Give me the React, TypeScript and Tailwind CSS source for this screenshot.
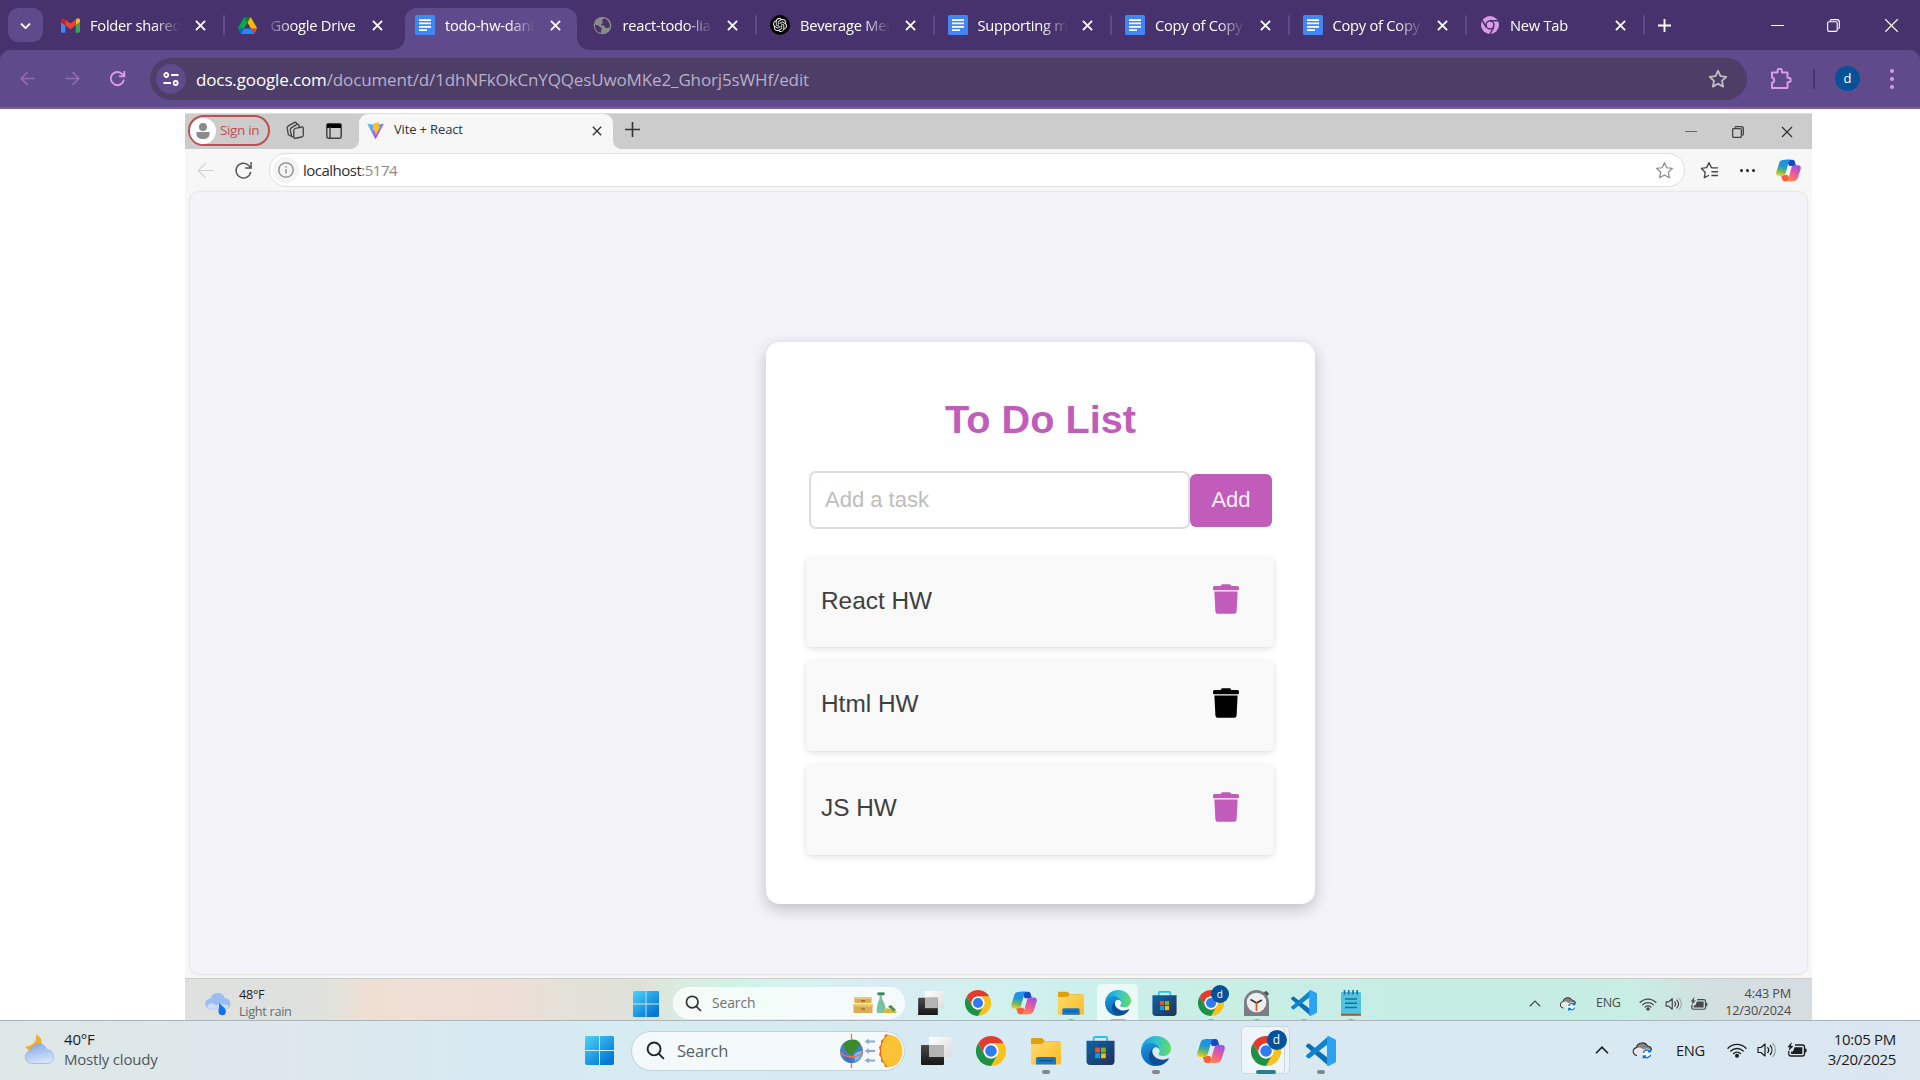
import type { ReactNode } from "react";
import { SiOpenai } from "react-icons/si";

/* ---------- brand and app icons ---------- */

const Gmail = () => (
  <svg viewBox="52 42 88 66" className="h-[15px] w-[19px]">
    <path fill="#4285f4" d="M58 108h14V74L52 59v43c0 3.32 2.69 6 6 6" />
    <path fill="#34a853" d="M120 108h14c3.32 0 6-2.69 6-6V59l-20 15" />
    <path fill="#fbbc04" d="M120 48v26l20-15v-8c0-7.42-8.47-11.65-14.4-7.2" />
    <path fill="#ea4335" d="M72 74V48l24 18 24-18v26L96 92" />
    <path fill="#c5221f" d="M52 51v8l20 15V48l-5.6-4.2c-5.94-4.45-14.4-.22-14.4 7.2" />
  </svg>
);

const Drive = () => (
  <svg viewBox="0 0 87.3 78" className="h-[17px] w-[19px]">
    <path fill="#0066da" d="m6.6 66.85 3.85 6.65c.8 1.4 1.95 2.5 3.3 3.3l13.75-23.8h-27.5c0 1.55.4 3.1 1.2 4.5z" />
    <path fill="#00ac47" d="m43.65 25-13.75-23.8c-1.35.8-2.5 1.9-3.3 3.3l-25.4 44a9.06 9.06 0 0 0 -1.2 4.5h27.5z" />
    <path fill="#ea4335" d="m73.55 76.8c1.35-.8 2.5-1.9 3.3-3.3l1.6-2.75 7.65-13.25c.8-1.4 1.2-2.95 1.2-4.5h-27.502l5.852 11.5z" />
    <path fill="#00832d" d="m43.65 25 13.75-23.8c-1.35-.8-2.9-1.2-4.5-1.2h-18.5c-1.6 0-3.15.45-4.5 1.2z" />
    <path fill="#2684fc" d="m59.8 53h-32.3l-13.75 23.8c1.35.8 2.9 1.2 4.5 1.2h50.8c1.6 0 3.15-.45 4.5-1.2z" />
    <path fill="#ffba00" d="m73.4 26.5-12.7-22c-.8-1.4-1.95-2.5-3.3-3.3l-13.75 23.8 16.15 28h27.45c0-1.55-.4-3.1-1.2-4.5z" />
  </svg>
);

const Docs = () => (
  <svg viewBox="0 0 20 20" className="size-5">
    <rect width="20" height="20" rx="1.5" fill="#4285f4" />
    <path d="M4 5.2h12M4 8.4h12M4 11.9h12M4 15.2h8" stroke="#fff" strokeWidth="1.7" />
  </svg>
);

const Globe = () => (
  <svg viewBox="0 0 20 20" className="size-[19px]">
    <circle cx="10" cy="10" r="9.3" fill="#8a8a86" />
    <path
      d="M2.2 9.2c2 .2 3.8.4 4.3 1.8.5 1.1 2 .7 2.6 1.6.6 1.1-.6 1.8-.6 2.9 0 .9-.1 1.8-.4 2.3-3.6-.6-6.6-4.3-5.9-8.6zM12 2.3c-.5 1.3-2.4 1-2.6 2.5-.1 1 1.3 1.3 1 2.4-.4 1.2-1.9.8-2 2 .6 1.1 2.2.3 3.3 1 1.2.8.7 2.3 2.3 2.5 1.4.1 2.3-.7 3.7-.9.6-4.4-1.9-8-5.7-9.5z"
      fill="#47326e"
    />
  </svg>
);

const Gpt = () => (
  <span className="flex size-5 items-center justify-center rounded-full bg-black">
    <SiOpenai className="size-[14px] text-white" />
  </span>
);

const ChromeMono = () => (
  <svg viewBox="0 0 48 48" className="size-[18px]">
    <circle cx="24" cy="24" r="24" fill="#dc9be8" />
    <circle cx="24" cy="24" r="10.5" fill="#dc9be8" stroke="#47326e" strokeWidth="4" />
    <path d="M24 12.5h21M14 30 3.5 12M34 30 24 48" stroke="#47326e" strokeWidth="4" />
  </svg>
);

const Chrome = ({ className }: { className: string }) => (
  <svg viewBox="0 0 48 48" className={className}>
    <path fill="#e33b2e" d="M24 12H44.785A24 24 0 0 0 3.215 12L13.608 30A12 12 0 0 1 24 12Z" />
    <path fill="#fcc016" d="M34.392 30L24 48A24 24 0 0 0 44.785 12H24A12 12 0 0 1 34.392 30Z" />
    <path fill="#1f9145" d="M13.608 30L3.215 12A24 24 0 0 0 24 48L34.392 30A12 12 0 0 1 13.608 30Z" />
    <circle cx="24" cy="24" r="12" fill="#fff" />
    <circle cx="24" cy="24" r="9.3" fill="#2f7bf0" />
  </svg>
);

const Edge = ({ className }: { className: string }) => (
  <svg viewBox="0 0 256 256" className={className}>
    <defs>
      <linearGradient id="edgeTop" x1="0" y1="0.4" x2="1" y2="0.5">
        <stop offset="0" stopColor="#1a9be0" />
        <stop offset="0.5" stopColor="#33c3d0" />
        <stop offset="1" stopColor="#63dc62" />
      </linearGradient>
      <linearGradient id="edgeMid" x1="0" y1="0" x2="0.3" y2="1">
        <stop offset="0" stopColor="#1b9de2" />
        <stop offset="1" stopColor="#0b62b8" />
      </linearGradient>
    </defs>
    <path fill="#0c4f98" d="M231.1 190.5c-3.4 1.8-6.9 3.4-10.5 4.7-11.5 4.3-23.6 6.5-35.9 6.5-47.3 0-88.5-32.5-88.5-74.3.1-11.4 6.4-21.9 16.4-27.3-42.8 1.8-53.8 46.4-53.8 72.5 0 73.9 68.1 81.4 82.8 81.4 7.9 0 19.8-2.3 27-4.6l1.3-.4c27.6-9.5 51-28.1 66.6-52.8 1.2-1.9.6-4.3-1.2-5.5-1.3-.8-2.9-.9-4.2-.2z" />
    <path fill="url(#edgeMid)" d="M105.7 241.4c-8.9-5.5-16.6-12.8-22.7-21.3-26.3-36-18.4-86.5 17.6-112.8 3.8-2.7 7.7-5.2 11.9-7.2 3.1-1.5 8.4-4.1 15.5-4 10.1.1 19.6 4.9 25.7 13 4 5.4 6.3 11.9 6.4 18.7 0-.2 24.5-79.6-80-79.6-43.9 0-80 41.7-80 78.2-.2 19.3 4 38.5 12.1 56 27.6 58.8 94.8 87.6 156.4 67.1-21.1 6.6-44.1 3.7-62.9-8.1z" />
    <path fill="url(#edgeTop)" d="M152.3 148.9c-.8 1-3.3 2.5-3.3 5.7 0 2.6 1.7 5.1 4.7 7.2 14.4 10 41.5 8.7 41.6 8.7 10.7 0 21.1-2.9 30.3-8.3 18.8-11 30.4-31.1 30.4-52.9.3-22.4-8-37.3-11.3-43.9C223.5 23.9 177.7 0 128 0 58 0 1 56.2 0 126.2c.5-36.5 36.8-66 80-66 3.5 0 23.5.3 42 10.1 16.3 8.6 24.9 18.9 30.8 29.2 6.2 10.7 7.3 24.1 7.3 29.5 0 5.3-2.7 13.3-7.8 19.9z" />
  </svg>
);

const Copilot = ({ className }: { className: string }) => (
  <svg viewBox="0 0 28 28" className={className}>
    <defs>
      <linearGradient id="copL" x1="0.5" y1="0" x2="0.3" y2="1">
        <stop offset="0" stopColor="#1f8df0" />
        <stop offset="0.4" stopColor="#2298d0" />
        <stop offset="0.7" stopColor="#6fb562" />
        <stop offset="1" stopColor="#f0d120" />
      </linearGradient>
      <linearGradient id="copR" x1="0.6" y1="0" x2="0.2" y2="1">
        <stop offset="0" stopColor="#a052ea" />
        <stop offset="0.5" stopColor="#ec5c96" />
        <stop offset="1" stopColor="#ff8a4a" />
      </linearGradient>
    </defs>
    <path fill="#1649c4" d="M11 2h7.500c1.500 0 2.300 1 2.700 2.400L22.500 9H15z" />
    <path fill="#f5603e" d="M17 26H9.500c-1.500 0-2.300-1-2.700-2.400L5.500 19H13z" />
    <path fill="url(#copL)" d="M9.500 2h7c-1.400.5-2 1.800-2.500 3.400L10.800 17c-.6 2-1.800 3-3.700 3H3.200C.7 20-.3 18 .4 15.500L3.700 5.200C4.500 3 6.500 2 9.500 2z" />
    <path fill="url(#copR)" d="M18.500 26h-7c1.400-.5 2-1.800 2.500-3.400L17.200 11c.6-2 1.800-3 3.700-3h3.900c2.500 0 3.500 2 2.800 4.500l-3.300 10.300c-.8 2.200-2.800 3.200-5.800 3.200z" />
  </svg>
);

const Folder = ({ className }: { className: string }) => (
  <svg viewBox="0 0 30 30" className={className}>
    <defs>
      <linearGradient id="fold" x1="0" y1="0" x2="1" y2="1">
        <stop offset="0" stopColor="#ffdb6b" />
        <stop offset="1" stopColor="#fbbb25" />
      </linearGradient>
    </defs>
    <path fill="#dfa00c" d="M0 3.500C0 2.500.7 2 1.500 2H10c1 0 1.600.4 2.200 1.200L13.500 5H28v6H0z" />
    <path fill="url(#fold)" d="M0 8h9.500c1.200 0 2-.5 2.800-1.300L14 5.200h14.500c.9 0 1.500.6 1.500 1.500V27c0 .9-.6 1.500-1.500 1.500h-27C.6 28.500 0 27.900 0 27z" />
    <path fill="#1678c8" d="M5 28.500v-5.800C5 21.600 5.800 21 7 21h16c1.200 0 2 .6 2 1.700v5.800z" />
    <path stroke="#0f4f91" strokeWidth="1.2" d="M8 24.600h14" />
  </svg>
);

const Store = ({ className }: { className: string }) => (
  <svg viewBox="0 0 30 30" className={className}>
    <defs>
      <linearGradient id="store" x1="0" y1="0" x2="1" y2="1">
        <stop offset="0" stopColor="#0f63ac" />
        <stop offset="1" stopColor="#232f54" />
      </linearGradient>
    </defs>
    <path d="M8 6V2.500c0-1 .5-1.500 1.500-1.500h11c1 0 1.500.5 1.500 1.500V6" fill="none" stroke="#2dbdf0" strokeWidth="1.900" />
    <path fill="url(#store)" d="M.5 5h29v21.500c0 2-1.500 3.500-3.500 3.500H4c-2 0-3.500-1.500-3.500-3.500z" />
    <path fill="#f25022" d="M9.500 12h5v5h-5z" />
    <path fill="#7fba00" d="M15.500 12h5v5h-5z" />
    <path fill="#00a4ef" d="M9.500 18h5v5h-5z" />
    <path fill="#ffb900" d="M15.500 18h5v5h-5z" />
  </svg>
);

const Code = ({ className }: { className: string }) => (
  <svg viewBox="0 0 30 30" className={className}>
    <path fill="#0a6fb5" d="M0 9.500 2 7.800c.5-.4 1-.4 1.500 0L22 22v7.500L.3 10.800C0 10.400-.2 10 0 9.500z" />
    <path fill="#0e83ce" d="M0 20.500 2 22.300c.5.4 1 .4 1.500 0L22 8V.5L.3 19.200c-.3.4-.5.9-.3 1.300z" />
    <path fill="#2ba3f2" d="M21.500.3c.5-.3 1-.3 1.500 0l6 2.900c.6.3 1 .9 1 1.600v20.400c0 .7-.4 1.300-1 1.600l-6 2.900c-.5.3-1 .3-1.500 0-.3-.2-.5-.5-.5-1V1.300c0-.5.2-.8.5-1z" />
  </svg>
);

const TaskView = ({ className }: { className: string }) => (
  <svg viewBox="0 0 30 28" className={className}>
    <defs>
      <linearGradient id="tvDark" x1="0" y1="0" x2="0" y2="1">
        <stop offset="0" stopColor="#4a4a4a" />
        <stop offset="1" stopColor="#161616" />
      </linearGradient>
      <linearGradient id="tvLight" x1="0" y1="0" x2="1" y2="1">
        <stop offset="0" stopColor="#ffffff" />
        <stop offset="1" stopColor="#dcdcdc" />
      </linearGradient>
    </defs>
    <rect x="8" width="22" height="20" rx="1" fill="url(#tvLight)" />
    <rect y="8" width="23" height="20" rx="1" fill="url(#tvDark)" />
    <rect x="8" y="8" width="15" height="12" fill="#b4b4b4" />
  </svg>
);

const Windows = ({ className }: { className: string }) => (
  <svg viewBox="0 0 30 30" className={className}>
    <defs>
      <linearGradient id="win" gradientUnits="userSpaceOnUse" x1="0" y1="0" x2="24" y2="26">
        <stop offset="0" stopColor="#4fd3fb" />
        <stop offset="1" stopColor="#0379d6" />
      </linearGradient>
    </defs>
    <path fill="url(#win)" d="M1.500 0h13v14.500H0V1.500Q0 0 1.500 0zM15.500 0h13Q30 0 30 1.500v13H15.500zM0 15.500h14.500V30h-13Q0 30 0 28.500zM15.500 15.500H30v13q0 1.500-1.500 1.500h-13z" />
  </svg>
);

const Clock = () => (
  <svg viewBox="0 0 26 26" className="size-[26px]">
    <path d="M18.500 3.500 22 .8l3 3-2.500 3z" fill="#4e4e52" />
    <path d="M0 26V12.500a12.500 12.500 0 0 1 25 0V26z" fill="#7b7d84" />
    <circle cx="12.5" cy="12.5" r="9.8" fill="#eeeeee" />
    <path d="m6.500 9.500 6 3.500 5.500-3" fill="none" stroke="#333" strokeWidth="1.600" />
    <path d="M12.500 12.500V21" stroke="#dd5a2a" strokeWidth="1.800" />
  </svg>
);

const Notepad = () => (
  <svg viewBox="0 0 20 26" className="h-[26px] w-[20px]">
    <rect y="2" width="20" height="22" rx="1" fill="#4fc3e2" />
    <path d="M0 24.800h20" stroke="#a95a2d" strokeWidth="2" />
    <path d="M3.500 0v4.500M7.700 0v4.500M12 0v4.500M16.200 0v4.500" stroke="#20708c" strokeWidth="1.600" />
    <path d="M4 9h12M4 13.200h12M4 17.400h12" stroke="#1d6f93" strokeWidth="1.500" />
  </svg>
);

const Vite = () => (
  <svg viewBox="0 0 18 18" className="h-[17px] w-[17px]">
    <defs>
      <linearGradient id="viteA" x1="0" y1="0" x2="0.7" y2="1">
        <stop offset="0" stopColor="#41d1ff" />
        <stop offset="1" stopColor="#b52dfe" />
      </linearGradient>
    </defs>
    <path fill="url(#viteA)" d="M17.600 2.500 9.500 17.400c-.2.4-.7.4-.9 0L.4 2.500c-.2-.4.1-.8.5-.7L9 3.200l8.100-1.400c.4-.1.7.3.5.7z" />
    <path fill="#fcc21e" d="m12.800.2-5.700 1c-.1 0-.2.1-.2.3L6 8.600c0 .2.1.3.3.3l2-.4-.3 2.700c0 .2.1.3.3.3l1-.3-.5 3c-.1.2.2.4.3.2l5.200-10-2 .3z" />
  </svg>
);

/* ---------- line icons ---------- */

const Cross = ({ className }: { className: string }) => (
  <svg viewBox="0 0 12 12" fill="none" stroke="currentColor" className={className}>
    <path d="m1 1 10 10M11 1 1 11" />
  </svg>
);

const Plus = ({ className }: { className: string }) => (
  <svg viewBox="0 0 14 14" fill="none" stroke="currentColor" className={className}>
    <path d="M7 0v14M0 7h14" />
  </svg>
);

const Arrow = ({ className }: { className: string }) => (
  <svg viewBox="0 0 16 16" fill="none" stroke="currentColor" className={className}>
    <path d="M15.500 8H1.500M8 1.200 1.200 8 8 14.800" />
  </svg>
);

const Reload = ({ className }: { className: string }) => (
  <svg viewBox="0 0 18 18" fill="none" stroke="currentColor" className={className}>
    <path d="M15.800 10.200a7 7 0 1 1-1.600-5.700l2 2.200M16.200 1v5.700h-5.700" />
  </svg>
);

const Star = ({ className }: { className: string }) => (
  <svg viewBox="0 0 20 20" fill="none" stroke="currentColor" strokeLinejoin="round" className={className}>
    <path d="m10 1.800 2.500 5.300 5.800.7-4.300 4 1.100 5.800L10 14.800l-5.100 2.800L6 11.800l-4.300-4 5.800-.7z" />
  </svg>
);

const Restore = ({ className }: { className: string }) => (
  <svg viewBox="0 0 14 14" fill="none" stroke="currentColor" className={className}>
    <rect x="0.7" y="3" width="10.3" height="10.3" rx="1.5" />
    <path d="M3.200 1.800Q3.700.7 5 .7h5.500q2.800 0 2.800 2.800V9q0 1.300-1.100 1.800" />
  </svg>
);

const Magnifier = ({ className }: { className: string }) => (
  <svg viewBox="0 0 20 20" fill="none" stroke="currentColor" className={className}>
    <circle cx="8.5" cy="8.3" r="6.8" />
    <path d="m13.300 13.300 5.500 5.500" />
  </svg>
);

const Chevron = ({ className }: { className: string }) => (
  <svg viewBox="0 0 14 8" fill="none" stroke="currentColor" className={className}>
    <path d="m1 7.200 6-6 6 6" />
  </svg>
);

const Wifi = ({ className }: { className: string }) => (
  <svg viewBox="0 0 20 16" fill="none" stroke="currentColor" strokeLinecap="round" className={className}>
    <path d="M1 6.200a12.600 12.600 0 0 1 18 0M3.800 9a8.800 8.800 0 0 1 12.400 0M6.600 11.600a4.900 4.900 0 0 1 6.800 0" />
    <circle cx="10" cy="13.8" r="1.3" fill="currentColor" />
  </svg>
);

const Speaker = ({ className }: { className: string }) => (
  <svg viewBox="0 0 20 16" fill="none" stroke="currentColor" strokeLinecap="round" strokeLinejoin="round" className={className}>
    <path d="M1 5.500h3L8 2v12l-4-3.500H1z" />
    <path d="M10.800 5.500a4 4 0 0 1 0 5M13.300 3.500a7 7 0 0 1 0 9" />
    <path d="M16 1.500a10 10 0 0 1 0 13" opacity="0.35" />
  </svg>
);

const Battery = ({ className }: { className: string }) => (
  <svg viewBox="0 0 20 16" fill="none" stroke="currentColor" className={className}>
    <path d="M8 3h7.500q2 0 2 2v7q0 2-2 2H3.800q-2 0-2-2V9" />
    <path d="M18.500 6.700v3.600" strokeWidth="2" />
    <path d="M7.500 5.200h7.800V12H4V9.500h2z" fill="currentColor" stroke="none" />
    <path d="M4.800 0 .5 5.200h2.200L1.500 9 6.500 4H4z" fill="currentColor" stroke="none" />
  </svg>
);

const CloudSync = ({ className }: { className: string }) => (
  <svg viewBox="0 0 21 18" className={className}>
    <path d="M5 14.500a4 4 0 0 1-.6-7.900A6 6 0 0 1 15.500 5a4.300 4.300 0 0 1 4 4.500v4z" fill="#e9e9e9" />
    <path d="M2.500 7.500 8 6.500l9 4.500 2.800-2A4.300 4.300 0 0 0 15.500 5 6 6 0 0 0 4.500 6.300z" fill="#858585" />
    <path d="M5 14.500a4 4 0 0 1-.6-7.900A6 6 0 0 1 15.500 5a4.300 4.300 0 0 1 4 4" fill="none" stroke="#333" strokeWidth="1.200" />
    <circle cx="15" cy="12.8" r="5.2" fill="#fff" />
    <path d="M11.200 12a4 4 0 0 1 6.800-1.800M18.800 13.600a4 4 0 0 1-6.800 1.800M18.600 8v2.700h-2.700M11.400 17.600v-2.700h2.700" fill="none" stroke="#1673cc" strokeWidth="1.500" />
  </svg>
);

const Trash = () => (
  <svg viewBox="0 0 26 30" fill="currentColor" className="-mt-[3px] h-[30px] w-[26px]">
    <path d="M8 1.500Q8.200.3 9.500.3h7Q17.800.3 18 1.500l.2.500h6.300Q26 2.200 26 4v1.200q0 1-1 1H1q-1 0-1-1V4q0-1.800 1.500-2h6.300z" />
    <path d="M1.400 7.600h23.200l-1 19.800q-.2 2.300-2.300 2.300H4.700q-2.100 0-2.300-2.300z" />
  </svg>
);

const CloudMoon = () => (
  <svg viewBox="0 0 30 30" className="size-[30px]">
    <defs>
      <linearGradient id="cloudA" x1="0" y1="0" x2="0.3" y2="1">
        <stop offset="0" stopColor="#7fa6e8" />
        <stop offset="1" stopColor="#d3e3fb" />
      </linearGradient>
    </defs>
    <path d="M11 .5c4.500 2 6.500 6 5.500 10.500L5 17C3 16 1.300 14.500.5 12.800 7 12 12.500 8 11 .5z" fill="#f5ac28" />
    <path d="M6.500 29.500a6.500 6.500 0 0 1-.8-12.900 8.500 8.500 0 0 1 16.300-.8 7 7 0 0 1 1.500 13.700z" fill="url(#cloudA)" stroke="#7d9bdb" strokeWidth="0.5" />
  </svg>
);

const CloudRain = () => (
  <svg viewBox="0 0 26 24" className="h-6 w-[26px]">
    <path d="M6 17.500a5.500 5.500 0 0 1-.5-11 7.500 7.500 0 0 1 14.300-.5 5.800 5.800 0 0 1 .7 11.500z" fill="#9dbcf2" />
    <path d="M2 14c3-4 8-3 9 0 3-3 9-2 13 0-1 2-2.500 3.500-4 3.500H6c-2 0-3.500-1.500-4-3.500z" fill="#cbdcfa" />
    <path d="M14 11c.5 4-.5 5.500-.5 8.500a3.700 3.700 0 0 0 7.400 0c0-3.500-4-5.500-6.900-8.500z" fill="#1673ee" />
  </svg>
);

const EquinoxArt = () => (
  <svg viewBox="0 0 63 34" className="h-[34px] w-[63px]">
    <circle cx="11.5" cy="17.5" r="11.5" fill="#4a7fbf" />
    <path d="M4 9.500C9 4 18 4.500 20.500 10c-3 1-1.500 5-5 6-2.500.5-1 4-4 5C8 20 4 16 4 9.500z" fill="#3c8a28" />
    <path d="M14 21c2-2 4-4 8.500-4-.5 5-3 8.500-7.500 10.500z" fill="#78bdf2" />
    <path d="M5 22c2 0 6 2 6 6-3 0-5.500-2-6-6z" fill="#2f74c0" />
    <path d="M11.500 0v6M11.500 29v5M.3 17.500c2 7 20 7 22.500 0" fill="none" stroke="#f0705a" strokeWidth="1.300" />
    <path d="M27 7.500h8M27 17h8M27 26.500h8" stroke="#8fa9cc" strokeWidth="2" />
    <path d="m29 4.800-4.500 2.700 4.500 2.700zM29 14.300 24.500 17l4.500 2.700zM29 23.800l-4.500 2.700 4.500 2.700z" fill="#8fa9cc" />
    <path d="M49 .5h-4l-1 4-3 2v4l-2 2.500 1 4-1 4 2 2.500v4l3 2 1 3.500h4z" fill="#e46a1c" />
    <path d="M48 .8C57 .8 62.500 8 62.500 17S57 33.200 48 33.200C43 29 41 23 41 17S43 5 48 .8z" fill="#fac234" />
  </svg>
);

const CleaningArt = () => (
  <svg viewBox="0 0 44 22" className="h-[22px] w-[44px]">
    <path d="M1.500 6h17v5h-17zM.5 13h19v8H.5z" fill="#dcab52" />
    <path d="M1 5h18v2H1zM0 12h20v2.500H0z" fill="#f0c96d" />
    <path d="M8 8.800h4M8 17h4" stroke="#7d5a22" strokeWidth="1.200" />
    <path d="M24.500.5h7V3L29 4v3c3 4 4 9 3.500 14h-8.500C23 16 24.500 11 26.500 7V3.500h-2z" fill="#79c3a4" />
    <path d="M24.500.5h7V3h-7z" fill="#3f8a63" />
    <path d="m29 20.500 5-4.500 9.500 3.500v1.500H30z" fill="#d9b53a" />
    <path d="m35 14.500 3-1.500 5 5-2.500 1.500z" fill="#4b8f3a" />
  </svg>
);

/* ---------- shared pieces ---------- */

const Badge = ({ className }: { className: string }) => (
  <span className={`absolute flex items-center justify-center rounded-full bg-[#04529a] text-white ${className}`}>d</span>
);

type TabProps = { icon: ReactNode; title: string; kind?: "active" | "right" | "plain"; separator?: boolean };

function Tab({ icon, title, kind = "plain", separator = true }: TabProps) {
  const active = kind === "active";
  return (
    <div className="relative flex h-[50px] w-[177.5px] shrink-0 items-start pt-2">
      {active && (
        <>
          <span className="absolute inset-x-[3px] top-2 bottom-0 rounded-t-[12px] bg-[#5f4b8b]" />
          <span className="absolute bottom-0 -left-[9px] size-3 bg-[radial-gradient(circle_at_0_0,#47326e_11.5px,#5f4b8b_12px)]" />
          <span className="absolute -right-[9px] bottom-0 size-3 bg-[radial-gradient(circle_at_100%_0,#47326e_11.5px,#5f4b8b_12px)]" />
        </>
      )}
      <div className="relative flex h-[34px] w-full items-center pl-[13px]">
        <span className="flex w-5 justify-center">{icon}</span>
        <span
          className={
            kind === "right"
              ? "ml-2.5 flex w-[88px] justify-end overflow-hidden mask-l-from-70% mask-l-to-105% whitespace-nowrap"
              : "ml-2.5 w-[90px] overflow-hidden mask-r-from-70% mask-r-to-100% whitespace-nowrap"
          }
        >
          <span className="text-[14.7px] leading-6 tracking-[-0.25px] text-white">{title}</span>
        </span>
        <span className={kind === "right" ? "ml-4 flex w-3 justify-center" : "ml-[14px] flex w-3 justify-center"}>
          <Cross className="size-[11px] stroke-2 text-white" />
        </span>
      </div>
      {separator && <span className="absolute top-[15px] right-0 h-5 w-0.5 rounded bg-[#5f4b8b]" />}
    </div>
  );
}

function ChromeHeader() {
  return (
    <header className="h-[109px] border-b-2 border-[#8159a4] bg-[#47326e]">
      <div className="flex h-[50px] items-start">
        <button className="mt-2 ml-2 flex h-[34px] w-[35px] items-center justify-center rounded-[10px] bg-[#5f4b8b]">
          <Chevron className="mt-px h-1.5 w-[11px] rotate-180 stroke-[2.5] text-white" />
        </button>
        <div className="ml-1 flex">
          <Tab icon={<Gmail />} title="Folder shared" />
          <Tab icon={<Drive />} title="Google Drive" kind="right" separator={false} />
          <Tab icon={<Docs />} title="todo-hw-dani" kind="active" separator={false} />
          <Tab icon={<Globe />} title="react-todo-lia" />
          <Tab icon={<Gpt />} title="Beverage Mer" />
          <Tab icon={<Docs />} title="Supporting m" />
          <Tab icon={<Docs />} title="Copy of Copy" />
          <Tab icon={<Docs />} title="Copy of Copy" />
          <Tab icon={<ChromeMono />} title="New Tab" />
        </div>
        <div className="flex h-[50px] flex-1 items-center pl-[13px] text-white">
          <Plus className="size-[13px] stroke-2" />
          <span className="ml-[100px] h-px w-[13px] bg-white" />
          <Restore className="ml-[43px] size-[13px] stroke-[1.2]" />
          <Cross className="ml-[44px] size-[15px] stroke-[0.9]" />
        </div>
      </div>
      <div className="flex h-[57px] items-center rounded-t-[10px] bg-[#5f4b8b]">
        <Arrow className="ml-5 size-[15px] stroke-[1.8] text-[#916bb3]" />
        <Arrow className="ml-[30px] size-[15px] rotate-180 stroke-[1.8] text-[#916bb3]" />
        <Reload className="ml-[29px] size-[17px] stroke-2 text-[#dc9be8]" />
        <div className="ml-6 flex h-[42px] w-[1597px] items-center rounded-full bg-[#4c3e67] pl-1.5">
          <span className="flex size-[30px] items-center justify-center rounded-full bg-[#5f4b8b]">
            <svg viewBox="0 0 16 16" className="size-4" fill="none" stroke="#fff" strokeWidth="1.8">
              <circle cx="3.3" cy="4" r="2" />
              <path d="M8 4h7.500M.5 12H8" />
              <circle cx="12.7" cy="12" r="2" />
            </svg>
          </span>
          <span className="ml-2.5 flex-1 pt-0.5 text-[17px] tracking-[-0.13px] text-[#b9b0c9]">
            <span className="text-white">docs.google.com</span>/document/d/1dhNFkOkCnYQQesUwoMKe2_Ghorj5sWHf/edit
          </span>
          <Star className="mr-[19px] size-5 stroke-[1.8] text-[#c3c0c4]" />
        </div>
        <svg viewBox="0 0 22 22" className="ml-[23px] size-[22px]" fill="none" stroke="#dc9be8" strokeWidth="2" strokeLinejoin="round">
          <path d="M2 4.500h5.500V3a2.200 2.200 0 0 1 4.400 0v1.500h5.600v5.300h1a2.200 2.200 0 0 1 0 4.400h-1V20H2v-5.200a2.700 2.700 0 0 0 0-5.300z" />
        </svg>
        <span className="ml-[21px] h-5 w-0.5 bg-[#47326e]" />
        <span className="ml-5 flex size-[25px] items-center justify-center rounded-full bg-[#04529a] text-[13px] text-white">d</span>
        <span className="ml-[30px] flex flex-col gap-[4px]">
          <span className="size-1 rounded-full bg-[#dc9be8]" />
          <span className="size-1 rounded-full bg-[#dc9be8]" />
          <span className="size-1 rounded-full bg-[#dc9be8]" />
        </span>
      </div>
    </header>
  );
}

function EdgeHeader() {
  return (
    <>
      <div className="flex h-9 items-start border-t border-[#dedede] bg-[#cccccc] text-[#333]">
        <div className="mt-px ml-[3px] flex h-[31px] w-[82px] items-center rounded-full border-2 border-[#bd4f52]">
          <span className="flex size-[26px] items-center justify-center rounded-full bg-white">
            <svg viewBox="0 0 14 16" className="h-4 w-3.5" fill="#8b8b8b">
              <circle cx="7" cy="4" r="4" />
              <path d="M0.500 9h13v2C13.500 14.500 11 16 7 16S.5 14.500.5 11z" />
            </svg>
          </span>
          <span className="ml-1 text-[13.5px] tracking-[-0.35px] text-[#bd4f52]">Sign in</span>
        </div>
        <svg viewBox="0 0 20 20" className="mt-[7px] ml-[16px] size-[19px]" fill="#cccccc" stroke="#444" strokeWidth="1.4" strokeLinejoin="round">
          <path d="M2.500 14.500 1.200 7.500Q1 6 2.500 5.200L9 1.500q1.500-.5 2 .8l.5 1.700-6 12z" />
          <path d="M6 16.500 4.500 9.500Q4.300 8 5.500 7.200L11.500 3.500q1.500-.5 2 .8l.5 1.700-5 11z" />
          <rect x="8.200" y="7" width="10" height="10.500" rx="1.800" transform="skewY(-12) translate(0 2.800)" />
        </svg>
        <svg viewBox="0 0 16 16" className="mt-[9px] ml-[21px] size-4" fill="none" stroke="#444" strokeWidth="1.5">
          <rect x="0.8" y="0.8" width="14.4" height="14.4" rx="2" />
          <path d="M1 3h14" stroke="#000" strokeWidth="4" />
          <path d="M4 4v11" />
        </svg>
        <div className="relative ml-[17px] flex h-[35px] w-[254px] items-center rounded-t-[9px] bg-[#f7f7f7] pb-[3px] pl-2">
          <span className="absolute bottom-0 -left-2 size-2 bg-[radial-gradient(circle_at_0_0,#cccccc_7.5px,#f7f7f7_8px)]" />
          <span className="absolute -right-2 bottom-0 size-2 bg-[radial-gradient(circle_at_100%_0,#cccccc_7.5px,#f7f7f7_8px)]" />
          <Vite />
          <span className="flex-1 pl-[10px] text-[13px] tracking-[-0.15px]">Vite + React</span>
          <Cross className="mt-0.5 mr-[11px] size-[10px] stroke-[1.6]" />
        </div>
        <Plus className="mt-2 ml-3 size-[15px] stroke-[1.5]" />
        <div className="ml-auto flex h-[35px] items-center">
          <span className="h-[1.5px] w-3 bg-[#666]" />
          <Restore className="ml-[35px] size-[12px] stroke-[1.6] text-[#444]" />
          <Cross className="mr-[19px] ml-[37px] size-3 stroke-[1.3]" />
        </div>
      </div>
      <div className="flex h-[42px] items-center bg-[#f7f7f7]">
        <Arrow className="ml-3 size-[17px] stroke-1 text-[#cfcfcf]" />
        <Reload className="ml-[20px] size-[19px] stroke-[1.4] text-[#555]" />
        <div className="ml-[16px] flex h-[34px] w-[1416px] items-center rounded-full border border-[#dfdfdf] bg-white pl-[3px]">
          <span className="flex size-[26px] items-center justify-center rounded-full bg-[#f4f4f4]">
            <svg viewBox="0 0 16 16" className="size-4" fill="none" stroke="#858585" strokeWidth="1.3">
              <circle cx="8" cy="8" r="7.2" />
              <path d="M8 7v4.500M8 4.300v1.400" />
            </svg>
          </span>
          <span className="ml-1 flex-1 text-[15px] tracking-[-0.5px] text-[#8a8a8a]">
            <span className="text-[#2f2f2f]">localhost</span>:5174
          </span>
          <Star className="mr-2.5 size-[19px] stroke-[1.3] text-[#8c8c8c]" />
        </div>
        <svg viewBox="0 0 20 20" className="ml-[15px] size-[19px]" fill="none" stroke="#444" strokeWidth="1.4" strokeLinejoin="round">
          <path d="M13.500 7.300 12 7 9.500 1.800 7 7l-5.500.8 4 4-1 5.700 5-2.500M12.500 7.300h6.500M12 11.300h7M12 15.300h7" />
        </svg>
        <span className="ml-[21px] flex gap-[3px]">
          <span className="size-[3px] rounded-full bg-[#222]" />
          <span className="size-[3px] rounded-full bg-[#222]" />
          <span className="size-[3px] rounded-full bg-[#222]" />
        </span>
        <Copilot className="ml-[21px] size-[25px]" />
      </div>
    </>
  );
}

const tasks = [
  { name: "React HW", hovered: false },
  { name: "Html HW", hovered: true },
  { name: "JS HW", hovered: false },
];

function TodoPage() {
  return (
    <div className="h-[787px] bg-[#f7f7f7] px-[5px] pt-px pb-1">
      <main className="flex h-[782px] justify-center rounded-[9px] bg-[#f4f3f9] pt-[150px] font-['Liberation_Sans',Arial,sans-serif] shadow-[0_0_3px_rgba(0,0,0,0.16)]">
        <section className="ml-[84px] h-[562px] w-[549px] rounded-[14px] bg-white px-10 shadow-[0_5px_16px_rgba(0,0,20,0.22)]">
          <h1 className="mt-[53px] text-center text-[39.7px] leading-[48px] font-bold text-[#c15cba]">To Do List</h1>
          <div className="mt-[28px] ml-[3px] flex items-center">
            <div className="flex h-[58px] w-[381px] items-center rounded-[7px] border-[2.5px] border-[#dedede] pb-px pl-[14px] text-[22px] text-[#bdbdbd]">Add a task</div>
            <button className="h-[53px] w-[82px] rounded-[6px] bg-[#c15cba] pb-px text-[22px] text-[#fbeefa]">Add</button>
          </div>
          <ul className="mt-[27.5px] mr-px flex flex-col gap-[13px]">
            {tasks.map((task) => (
              <li key={task.name} className="flex h-[90.7px] items-center justify-between rounded-[6px] bg-[#f9f9f9] pr-[35px] pb-0.5 pl-[15px] text-[24.4px] text-[#3f3f3f] shadow-[0_2px_6px_rgba(0,0,0,0.13)]">
                {task.name}
                <span className={task.hovered ? "text-black" : "text-[#c15cba]"}>
                  <Trash />
                </span>
              </li>
            ))}
          </ul>
        </section>
      </main>
    </div>
  );
}

const InnerCell = ({ children, active = false, open = false }: { children: ReactNode; active?: boolean; open?: boolean }) => (
  <span className="relative flex h-[42px] w-[46.6px] shrink-0 items-center justify-center pt-1.5">
    {active && <span className="absolute top-[5px] bottom-0 w-[41px] rounded-t-[5px] bg-white/60" />}
    <span className="relative">{children}</span>
    {open && <span className="absolute bottom-0 h-0.5 w-1.5 rounded-t bg-[#93b3ae]" />}
    {active && <span className="absolute bottom-0 h-0.5 w-4 rounded-t bg-[#86c4dd]" />}
  </span>
);

function InnerTaskbar() {
  return (
    <div className="flex h-[43px] items-start border-t border-[#c9cdcb] bg-[linear-gradient(90deg,#e0e1df_0%,#dfe1df_7%,#e3e1da_9.5%,#efdfd2_11%,#f0dfd6_15%,#eeded7_20%,#e3e1d8_23.5%,#dfe1d9_28%,#d9eee2_31%,#cff5e7_34%,#d6f1ee_38%,#d9ecf6_43%,#d3f0ee_48%,#cdf0ec_55%,#c9eee4_64%,#c5ede4_80%,#c8ede3_89%,#d3dfe0_94%,#d6dcdf_100%)] text-[#4a4a4a]">
      <span className="mt-[13px] ml-[20px]"><CloudRain /></span>
      <div className="mt-[7px] ml-2 w-[200px] text-[12.7px] leading-[17px] tracking-[-0.3px]">
        <div className="text-[#222]">48°F</div>
        <div className="text-[#6c6c6c]">Light rain</div>
      </div>
      <Windows className="mt-[12px] ml-[194px] size-[26px]" />
      <div className="mt-2 ml-[14px] flex h-8 w-[232px] items-center rounded-full border border-white/80 bg-white/75 pl-[11px]">
        <Magnifier className="size-[17px] stroke-2 text-[#333]" />
        <span className="ml-2.5 flex-1 text-[13.8px] tracking-[-0.05px] text-[#707070]">Search</span>
        <span className="mr-[7px]"><CleaningArt /></span>
      </div>
      <div className="ml-[3px] flex">
        <InnerCell><TaskView className="h-6 w-[26px]" /></InnerCell>
        <InnerCell><Chrome className="size-[26px]" /></InnerCell>
        <InnerCell><Copilot className="size-[26px]" /></InnerCell>
        <InnerCell open><Folder className="size-[26px]" /></InnerCell>
        <InnerCell active><Edge className="size-[26px]" /></InnerCell>
        <InnerCell><Store className="size-[25px]" /></InnerCell>
        <InnerCell open>
          <Chrome className="size-[26px]" />
          <Badge className="-top-[5px] -right-[5px] size-[18px] text-[10px]" />
        </InnerCell>
        <InnerCell open><Clock /></InnerCell>
        <InnerCell open><Code className="size-[26px]" /></InnerCell>
        <InnerCell open><Notepad /></InnerCell>
      </div>
      <div className="ml-auto flex h-[42px] items-center pt-[7px]">
        <Chevron className="h-[7px] w-3 stroke-[1.5]" />
        <CloudSync className="ml-[18px] h-[15px] w-[18px]" />
        <span className="ml-[19px] w-[25px] text-[12.5px] tracking-[-0.3px]">ENG</span>
        <Wifi className="ml-[18px] h-[14px] w-[18px] stroke-[1.5]" />
        <Speaker className="ml-2 h-[14px] w-[18px] stroke-[1.4]" />
        <Battery className="ml-[7px] h-[14px] w-[18px] stroke-[1.4]" />
        <span className="mr-[21px] ml-[14px] w-[69px] pb-1 text-right text-[12.7px] leading-[17px] tracking-[-0.15px] whitespace-nowrap">
          4:43 PM
          <br />
          12/30/2024
        </span>
      </div>
    </div>
  );
}

const OuterCell = ({ children, open = false, active = false }: { children: ReactNode; open?: boolean; active?: boolean }) => (
  <span className="relative flex h-[59px] w-[55px] shrink-0 items-center justify-center">
    {active && (
      <>
        <span className="absolute top-[5px] left-[7px] h-12 w-[45px] rounded-[5px] border border-[#ccd7de] bg-[#e9f3f9]" />
        <span className="absolute top-[5px] left-[3px] h-12 w-[44px] rounded-[5px] border border-[#ccd7de] bg-[#eef5fb]" />
      </>
    )}
    <span className="relative">{children}</span>
    {open && <span className="absolute top-[49px] h-1 w-2 rounded-full bg-[#83888b]" />}
    {active && <span className="absolute top-[49px] h-1 w-5 rounded-full bg-[#27808f]" />}
  </span>
);

function OuterTaskbar() {
  return (
    <footer className="flex h-[60px] items-center border-t border-[#aab6bb] bg-[linear-gradient(90deg,#dde8e6_0%,#dfe7ec_12%,#dde8ee_17%,#d8eaf1_24%,#d6ebf2_35%,#d8e9f2_60%,#d8e9f2_85%,#dbe6ef_100%)] text-[#1c1c1c]">
      <span className="ml-[25px] pb-1"><CloudMoon /></span>
      <div className="ml-[9px] w-[200px] pb-1 text-[15px] leading-5 tracking-[-0.2px]">
        <div>40°F</div>
        <div className="text-[#4e5658]">Mostly cloudy</div>
      </div>
      <Windows className="ml-[321px] size-[29px]" />
      <div className="ml-[17px] flex h-10 w-[274px] items-center rounded-full border border-[#c2d1da] bg-[#f4f9fc] pl-[14px]">
        <Magnifier className="size-[19px] stroke-2 text-[#222]" />
        <span className="ml-3 flex-1 pt-px text-[16.5px] tracking-[-0.2px] text-[#5a5f62]">Search</span>
        <span className="mr-px"><EquinoxArt /></span>
      </div>
      <div className="ml-[3px] flex">
        <OuterCell><TaskView className="h-7 w-[30px]" /></OuterCell>
        <OuterCell><Chrome className="size-[30px]" /></OuterCell>
        <OuterCell open><Folder className="size-[30px]" /></OuterCell>
        <OuterCell><Store className="size-[29px]" /></OuterCell>
        <OuterCell open><Edge className="size-[30px]" /></OuterCell>
        <OuterCell><Copilot className="size-[28px]" /></OuterCell>
        <OuterCell active>
          <Chrome className="size-[30px]" />
          <Badge className="-top-[6px] -right-[6px] size-[20px] text-[12px]" />
        </OuterCell>
        <OuterCell open><Code className="size-[30px]" /></OuterCell>
      </div>
      <div className="ml-auto flex items-center pb-px">
        <Chevron className="h-2 w-[14px] stroke-[1.6]" />
        <CloudSync className="ml-[23px] h-[18px] w-[21px]" />
        <span className="ml-[23px] w-[29px] text-[14.7px] tracking-[-0.3px]">ENG</span>
        <Wifi className="ml-[22px] h-4 w-5 stroke-[1.4]" />
        <Speaker className="ml-2.5 h-4 w-5 stroke-[1.2]" />
        <Battery className="ml-2.5 h-4 w-5 stroke-[1.3]" />
        <span className="mr-[24px] ml-[13px] w-[76px] pb-[3px] text-right text-[15px] leading-5 tracking-[-0.3px] whitespace-nowrap">
          10:05 PM
          <br />
          3/20/2025
        </span>
      </div>
    </footer>
  );
}

export default function App() {
  return (
    <div className="flex h-[1080px] w-[1920px] flex-col overflow-hidden bg-white font-['Open_Sans','Noto_Sans',sans-serif]">
      <ChromeHeader />
      <div className="mt-1 ml-[185px] h-[907px] w-[1627px] overflow-hidden">
        <EdgeHeader />
        <TodoPage />
        <InnerTaskbar />
      </div>
      <OuterTaskbar />
    </div>
  );
}
